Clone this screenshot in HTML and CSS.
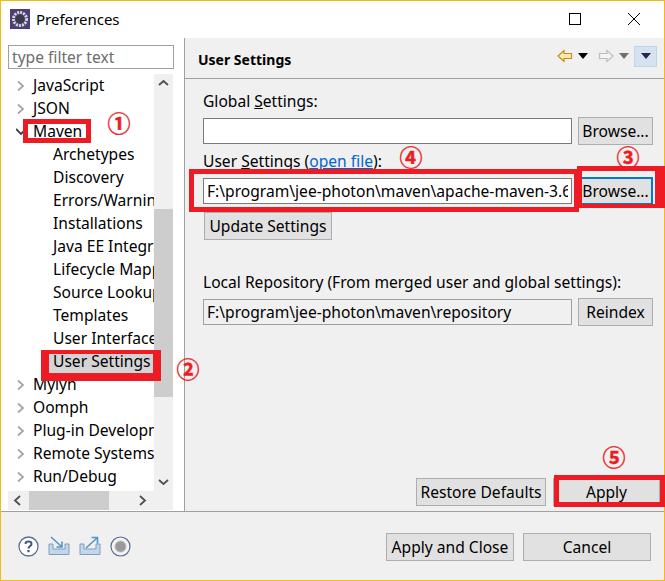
FILE: index.html
```html
<!DOCTYPE html>
<html lang="en">
<head>
    <meta charset="UTF-8">
    <meta name="viewport" content="width=device-width, initial-scale=1.0">
    <title>Preferences</title>
    <link rel="stylesheet" href="styles.css">
</head>
<body>

<div class="window">

    <div class="titlebar">
        <svg class="app-icon" width="20" height="20" viewBox="0 0 20 20">
            <rect width="20" height="20" fill="#4a3f78"/>
            <circle cx="10" cy="10" r="6.5" fill="none" stroke="#d8d8d8" stroke-width="3" stroke-dasharray="2 1"/>
            <circle cx="10" cy="10" r="4.5" fill="#3a3a4a"/>
        </svg>
        <span class="app-title">Preferences</span>
        <div class="win-btns">
            <svg width="14" height="14" viewBox="0 0 14 14"><rect x="1.5" y="1.5" width="11" height="11" fill="none" stroke="#000"/></svg>
            <svg width="14" height="14" viewBox="0 0 14 14"><path d="M1 1 L13 13 M13 1 L1 13" stroke="#000" fill="none"/></svg>
        </div>
    </div>

    <div class="main">
        <div class="sidebar">
            <input class="filter" type="text" placeholder="type filter text">
            <div class="tree-box">
                <div class="tree-row">
                    <ul class="tree">
                        <li><svg class="twist" width="10" height="12" viewBox="0 0 10 12"><path d="M2 1.5 L7 6 L2 10.5" fill="none" stroke="#a6a6a6" stroke-width="1.8"/></svg>JavaScript</li>
                        <li><svg class="twist" width="10" height="12" viewBox="0 0 10 12"><path d="M2 1.5 L7 6 L2 10.5" fill="none" stroke="#a6a6a6" stroke-width="1.8"/></svg>JSON</li>
                        <li><svg class="twist" width="10" height="12" viewBox="0 0 10 12"><path d="M0 3 L5 8 L10 3" fill="none" stroke="#404040" stroke-width="1.8"/></svg>Maven</li>
                        <li class="child">Archetypes</li>
                        <li class="child">Discovery</li>
                        <li class="child">Errors/Warnings</li>
                        <li class="child">Installations</li>
                        <li class="child">Java EE Integration</li>
                        <li class="child">Lifecycle Mappings</li>
                        <li class="child">Source Lookup</li>
                        <li class="child">Templates</li>
                        <li class="child">User Interface</li>
                        <li class="child selected">User Settings</li>
                        <li><svg class="twist" width="10" height="12" viewBox="0 0 10 12"><path d="M2 1.5 L7 6 L2 10.5" fill="none" stroke="#a6a6a6" stroke-width="1.8"/></svg>Mylyn</li>
                        <li><svg class="twist" width="10" height="12" viewBox="0 0 10 12"><path d="M2 1.5 L7 6 L2 10.5" fill="none" stroke="#a6a6a6" stroke-width="1.8"/></svg>Oomph</li>
                        <li><svg class="twist" width="10" height="12" viewBox="0 0 10 12"><path d="M2 1.5 L7 6 L2 10.5" fill="none" stroke="#a6a6a6" stroke-width="1.8"/></svg>Plug-in Development</li>
                        <li><svg class="twist" width="10" height="12" viewBox="0 0 10 12"><path d="M2 1.5 L7 6 L2 10.5" fill="none" stroke="#a6a6a6" stroke-width="1.8"/></svg>Remote Systems</li>
                        <li><svg class="twist" width="10" height="12" viewBox="0 0 10 12"><path d="M2 1.5 L7 6 L2 10.5" fill="none" stroke="#a6a6a6" stroke-width="1.8"/></svg>Run/Debug</li>
                    </ul>
                    <div class="vscroll">
                        <svg width="19" height="19" viewBox="0 0 19 19"><path d="M5 11 L9.5 7 L14 11" fill="none" stroke="#505050" stroke-width="1.8"/></svg>
                        <div class="vtrack"><div class="vthumb"></div></div>
                        <svg width="19" height="19" viewBox="0 0 19 19"><path d="M5 8 L9.5 12 L14 8" fill="none" stroke="#505050" stroke-width="1.8"/></svg>
                    </div>
                </div>
                <div class="hscroll">
                    <svg width="21" height="19" viewBox="0 0 21 19"><path d="M12 5 L7 9.5 L12 14" fill="none" stroke="#505050" stroke-width="1.8"/></svg>
                    <div class="hthumb"></div>
                    <svg class="hright" width="21" height="19" viewBox="0 0 21 19"><path d="M10 5 L15 9.5 L10 14" fill="none" stroke="#505050" stroke-width="1.8"/></svg>
                </div>
            </div>
        </div>

        <div class="content">
            <div class="head">
                <span class="head-title">User Settings</span>
                <div class="head-tools">
                    <svg width="16" height="14" viewBox="0 0 16 14"><path d="M1 7 L7 1.5 V4.5 H14.5 V9.5 H7 V12.5 Z" fill="#ffe9a8" stroke="#c88a1c" stroke-width="1.2"/></svg>
                    <svg width="10" height="6" viewBox="0 0 10 6"><path d="M0 0 H10 L5 6 Z" fill="#000"/></svg>
                    <svg class="gap-tool" width="16" height="14" viewBox="0 0 16 14"><path d="M15 7 L9 1.5 V4.5 H1.5 V9.5 H9 V12.5 Z" fill="#f4f4f4" stroke="#bdbdbd" stroke-width="1.2"/></svg>
                    <svg width="10" height="6" viewBox="0 0 10 6"><path d="M0 0 H10 L5 6 Z" fill="#707070"/></svg>
                    <span class="menu-tool"><svg width="10" height="6" viewBox="0 0 10 6"><path d="M0 0 H10 L5 6 Z" fill="#2b2350"/></svg></span>
                </div>
            </div>

            <div class="form">
                <label class="lbl">Global <u>S</u>ettings:</label>
                <div class="field">
                    <input class="txt" type="text">
                    <button class="btn browse">Browse...</button>
                </div>
                <label class="lbl second">User <u>S</u>ettings (<a href="#">open file</a>):</label>
                <div class="field">
                    <input class="txt" type="text" value="F:\program\jee-photon\maven\apache-maven-3.6.1\conf\settings.xml">
                    <button class="btn browse focused">Browse...</button>
                </div>
                <button class="btn update">Update Settings</button>
                <label class="lbl third">Local Repository (From merged user and global settings):</label>
                <div class="field">
                    <input class="txt readonly" type="text" value="F:\program\jee-photon\maven\repository" readonly>
                    <button class="btn browse">Reindex</button>
                </div>
            </div>

            <div class="page-btns">
                <button class="btn restore">Restore Defaults</button>
                <button class="btn apply">Apply</button>
            </div>
        </div>
    </div>

    <div class="footer">
        <div class="foot-icons">
            <svg width="21" height="21" viewBox="0 0 21 21"><circle cx="10.5" cy="10.5" r="9.5" fill="#fff" stroke="#5a6f94" stroke-width="1.3"/><path d="M7.5 8 C7.5 4.8 13.5 4.8 13.5 8 C13.5 10.2 10.5 10 10.5 12.5" fill="none" stroke="#46587c" stroke-width="2"/><rect x="9.4" y="14" width="2.2" height="2.2" fill="#46587c"/></svg>
            <svg width="22" height="20" viewBox="0 0 22 20"><path d="M1 8 V18.5 H21 V8 H17 V13 H5 V8 Z" fill="#c4d6ea" stroke="#7e9cc2"/><path d="M3 1 L14 11 M14 5.5 V11 H8.5" fill="none" stroke="#4f9ac4" stroke-width="1.6"/></svg>
            <svg width="22" height="20" viewBox="0 0 22 20"><path d="M1 8 V18.5 H21 V8 H17 V13 H5 V8 Z" fill="#c4d6ea" stroke="#7e9cc2"/><path d="M7 12 L18 2 M12.5 1.5 H18.5 V7.5" fill="none" stroke="#4f9ac4" stroke-width="1.6"/></svg>
            <svg width="21" height="21" viewBox="0 0 21 21"><circle cx="10.5" cy="10.5" r="9.5" fill="#f4f4f4" stroke="#5a6f94" stroke-width="1.2"/><circle cx="10.5" cy="10.5" r="5.5" fill="#9a9a9a" stroke="#bdbdbd"/></svg>
        </div>
        <div class="foot-btns">
            <button class="btn dialog">Apply and Close</button>
            <button class="btn dialog">Cancel</button>
        </div>
    </div>

    <div class="mark mark-maven"></div>
    <div class="mark mark-tree"></div>
    <div class="mark mark-input"></div>
    <div class="mark mark-browse"></div>
    <div class="mark mark-apply"></div>
    <span class="num num1">①</span>
    <span class="num num2">②</span>
    <span class="num num3">③</span>
    <span class="num num4">④</span>
    <span class="num num5">⑤</span>
</div>

</body>
</html>
```

FILE: styles.css
```css
* {
    box-sizing: border-box;
}
html, body {
    margin: 0;
    padding: 0;
}
body {
    width: 665px;
    height: 581px;
    overflow: hidden;
    font-family: "Noto Sans", sans-serif;
    font-size: 15.6px;
    color: #000;
    background-color: #fff;
}
.window {
    position: relative;
    width: 665px;
    height: 581px;
    display: flex;
    flex-direction: column;
    border: 1px solid #f5b90f;
}

/* title bar */
.titlebar {
    height: 37px;
    display: flex;
    align-items: center;
    padding: 0 0 2px 9px;
    background-color: #fff;
}
.app-title {
    margin-left: 6px;
    font-size: 15px;
}
.win-btns {
    margin-left: auto;
    display: flex;
    gap: 45px;
    padding-right: 23px;
}

/* main split */
.main {
    height: 474px;
    display: flex;
    border-bottom: 1px solid #a0a0a0;
}
.sidebar {
    width: 184px;
    padding: 7px 0 0 7px;
    background-color: #fff;
    border-right: 1px solid #a0a0a0;
}
.filter {
    display: block;
    width: 166px;
    height: 24px;
    padding: 0 3px;
    font: inherit;
    border: 1px solid #a0a0a0;
    outline: none;
}
.filter::placeholder {
    color: #6d6d6d;
}
.tree-box {
    width: 165px;
    margin-top: 5px;
}
.tree-row {
    display: flex;
    height: 417px;
}
.tree {
    width: 146px;
    height: 417px;
    margin: 0;
    padding: 0;
    list-style: none;
    overflow: hidden;
    white-space: nowrap;
}
.tree li {
    height: 23px;
    line-height: 22px;
    padding-left: 25px;
    position: relative;
}
.twist {
    position: absolute;
    left: 8px;
    top: 6px;
}
.tree li.child {
    padding-left: 45px;
}
.tree li.selected {
    margin-left: 41px;
    padding-left: 4px;
    background-color: #d4d4d4;
}
.vscroll {
    width: 19px;
    display: flex;
    flex-direction: column;
    background-color: #f0f0f0;
}
.vtrack {
    flex: 1;
    padding-top: 116px;
}
.vthumb {
    height: 188px;
    background-color: #cdcdcd;
}
.hscroll {
    height: 19px;
    display: flex;
    background-color: #f0f0f0;
}
.hthumb {
    width: 80px;
    background-color: #cdcdcd;
}
.hright {
    margin-left: 21px;
}

/* right side */
.content {
    flex: 1;
    display: flex;
    flex-direction: column;
    background-color: #f0f0f0;
}
.head {
    height: 41px;
    display: flex;
    align-items: center;
    padding: 0 7px 0 13px;
    border-bottom: 1px solid #a0a0a0;
}
.head-title {
    margin-top: 2px;
    font-weight: 700;
    font-size: 14px;
}
.head-tools {
    margin: -4px 0 0 auto;
    display: flex;
    align-items: center;
    gap: 5px;
}
.gap-tool {
    margin-left: 5px;
}
.menu-tool {
    width: 23px;
    height: 21px;
    display: flex;
    align-items: center;
    justify-content: center;
    background-color: #d5e3f1;
    border: 1px solid #bcd6ee;
}
.form {
    padding: 11px 11px 0 18px;
}
.lbl {
    display: block;
    height: 22px;
    line-height: 22px;
    margin-bottom: 5px;
}
.lbl.second {
    margin-top: 5px;
}
.lbl.third {
    margin-top: 31px;
}
.lbl a {
    color: #0066cc;
}
.field {
    display: flex;
    align-items: center;
    gap: 6px;
    height: 28px;
}
.txt {
    width: 369px;
    height: 26px;
    padding: 0 3px;
    font: inherit;
    border: 1px solid #7a7a7a;
    background-color: #fff;
    outline: none;
}
.txt.readonly {
    background-color: #f0f0f0;
    border-color: #a0a0a0;
}
.btn {
    height: 28px;
    padding: 0;
    font: inherit;
    color: #000;
    background-color: #e1e1e1;
    border: 1px solid #adadad;
}
.browse {
    width: 75px;
}
.focused {
    border: 2px solid #0078d7;
}
.update {
    width: 128px;
    margin: 7px 0 0 1px;
    display: block;
}
.page-btns {
    margin-top: auto;
    display: flex;
    gap: 7px;
    padding: 0 4px 5px 231px;
}
.restore {
    width: 130px;
}
.apply {
    width: 107px;
}

/* footer */
.footer {
    flex: 1;
    display: flex;
    align-items: center;
    padding: 2px 13px 0 17px;
    background-color: #f0f0f0;
}
.foot-icons {
    display: flex;
    align-items: center;
    gap: 9px;
    margin-top: -2px;
}
.foot-btns {
    margin-left: auto;
    display: flex;
    gap: 9px;
}
.dialog {
    width: 128px;
}

/* red annotations */
.mark {
    position: absolute;
    border: 5px solid #ed1c24;
}
.mark-maven {
    left: 22px;
    top: 118px;
    width: 68px;
    height: 24px;
}
.mark-tree {
    left: 40px;
    top: 349px;
    width: 120px;
    height: 31px;
    border-width: 4px 8px 8px 8px;
}
.mark-input {
    left: 188px;
    top: 168px;
    width: 390px;
    height: 43px;
}
.mark-browse {
    left: 576px;
    top: 165px;
    width: 90px;
    height: 42px;
    border-width: 5px 12px 4px 5px;
}
.mark-apply {
    left: 553px;
    top: 474px;
    width: 113px;
    height: 32px;
    border-right-width: 7px;
}
.num {
    position: absolute;
    width: 24px;
    height: 24px;
    line-height: 24px;
    text-align: center;
    font-family: "Noto Sans CJK SC", sans-serif;
    font-size: 23px;
    font-weight: 700;
    color: #ed1c24;
    -webkit-text-stroke: 0.4px #ed1c24;
}
.num1 { left: 106px; top: 109px; }
.num2 { left: 175px; top: 355px; }
.num3 { left: 615px; top: 143px; }
.num4 { left: 398px; top: 143px; }
.num5 { left: 601px; top: 443px; }
```
